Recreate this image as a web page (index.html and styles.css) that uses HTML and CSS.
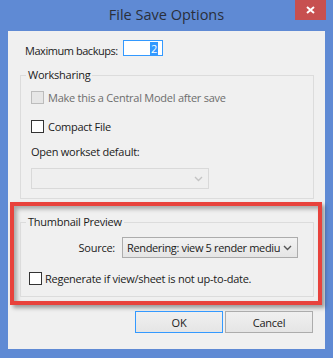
FILE: index.html
```html
<!DOCTYPE html>
<html>
<head>
<meta charset="utf-8">
<link rel="stylesheet" href="styles.css">
</head>
<body>
<div class="window">
  <div class="titlebar">
    <div></div>
    <div class="title">File Save Options</div>
    <div class="close-wrap">
      <div class="close">
        <svg width="9" height="8" viewBox="0 0 9 8"><path d="M1 1 L8 7 M8 1 L1 7" stroke="#fff" stroke-width="2"/></svg>
      </div>
    </div>
  </div>
  <div class="client">
    <div class="row-backups">
      <span class="lbl">Maximum backups:</span>
      <div class="numbox"><span class="sel">2</span></div>
    </div>

    <fieldset class="group ws">
      <legend>Worksharing</legend>
      <div class="group-body ws-body">
        <div class="chk-row disabled">
          <span class="box"></span><span>Make this a Central Model after save</span>
        </div>
        <div class="chk-row compact">
          <span class="box"></span><span>Compact File</span>
        </div>
        <div class="text-row">Open workset default:</div>
        <div class="combo disabled-combo">
          <svg width="9" height="6" viewBox="0 0 9 6"><path d="M1 1 L4.5 4.5 L8 1" fill="none" stroke="#c4c4c4" stroke-width="1.4"/></svg>
        </div>
      </div>
    </fieldset>

    <div class="highlight">
      <fieldset class="group thumb">
        <legend>Thumbnail Preview</legend>
        <div class="group-body thumb-body">
          <div class="source-row">
            <span class="src-lbl">Source:</span>
            <div class="combo source-combo">
              <span class="combo-text">Rendering: view 5 render mediu</span>
              <svg width="9" height="6" viewBox="0 0 9 6"><path d="M1 1 L4.5 4.5 L8 1" fill="none" stroke="#555" stroke-width="1.4"/></svg>
            </div>
          </div>
          <div class="chk-row regen">
            <span class="box"></span><span>Regenerate if view/sheet is not up-to-date.</span>
          </div>
        </div>
      </fieldset>
    </div>

    <div class="buttons">
      <div class="btn default">OK</div>
      <div class="btn">Cancel</div>
    </div>
  </div>
</div>
</body>
</html>
```

FILE: styles.css
```css
html, body {
  margin: 0;
  padding: 0;
}
body {
  width: 333px;
  height: 358px;
  overflow: hidden;
  font-family: "Open Sans", "Noto Sans", sans-serif;
  font-size: 11px;
  letter-spacing: -0.25px;
  color: #1b1b1b;
  white-space: nowrap;
}
.window {
  width: 333px;
  height: 358px;
  background: #5f8ad4;
  display: flex;
  flex-direction: column;
}
.titlebar {
  height: 31px;
  display: grid;
  grid-template-columns: 1fr auto 1fr;
  align-items: start;
}
.title {
  font-size: 14.5px;
  letter-spacing: 0;
  color: #2a2f3a;
  line-height: 16px;
  margin-top: 7px;
}
.close-wrap {
  display: flex;
  justify-content: flex-end;
  padding-right: 7px;
}
.close {
  width: 31px;
  height: 20px;
  background: #c75050;
  display: flex;
  align-items: center;
  justify-content: center;
}
.client {
  background: #f0f0f0;
  margin: 0 8px 9px 8px;
  height: 318px;
  display: flex;
  flex-direction: column;
}
.row-backups {
  display: flex;
  align-items: center;
  margin-top: 9px;
  padding-left: 17px;
  height: 16px;
}
.row-backups .lbl {
  width: 98px;
  flex: none;
  letter-spacing: -0.45px;
  position: relative;
  top: 2px;
}
.numbox {
  height: 14px;
  border: 1px solid #3399ff;
  background: #fff;
  display: flex;
  justify-content: flex-end;
  align-items: center;
  padding-right: 4px;
  box-sizing: content-box;
  width: 34px;
}
.sel {
  background: #3399ff;
  color: #fff;
  line-height: 13px;
  padding: 0 1px;
}
.group {
  margin: 0;
  padding: 0;
  border: 1px solid #dcdcdc;
  min-width: 0;
}
.group legend {
  padding: 0 2px;
  margin-left: 5px;
  line-height: 14px;
  height: 14px;
}
.ws {
  margin: 12px 11px 0 12px;
}
.ws-body {
  padding: 7px 0 9px 10px;
}
.chk-row {
  display: flex;
  align-items: center;
  height: 17px;
}
.box {
  width: 11px;
  height: 11px;
  border: 1px solid #333;
  background: #fff;
  margin-right: 4px;
  flex: none;
}
.chk-row.disabled {
  color: #6d6d6d;
}
.chk-row.disabled .box {
  border-color: #bcbcbc;
  background: #e6e6e6;
}
.chk-row.compact {
  margin-top: 12px;
}
.text-row {
  margin-top: 8px;
  height: 17px;
  line-height: 17px;
}
.combo {
  display: flex;
  align-items: center;
  justify-content: flex-end;
  box-sizing: border-box;
}
.disabled-combo {
  margin-top: 8px;
  width: 178px;
  height: 21px;
  border: 1px solid #d9d9d9;
  background: #efefef;
  padding-right: 5px;
}
.highlight {
  margin: 3px 3px 0 2px;
  border: 4px solid #e8423c;
  box-shadow: 3px 3px 4px rgba(0, 0, 0, 0.35), inset 3px 3px 4px rgba(0, 0, 0, 0.3);
  display: flex;
  flex-direction: column;
}
.thumb {
  margin: 9px 4px 4px 6px;
}
.thumb-body {
  padding: 8px 0 9px 0;
}
.source-row {
  display: flex;
  align-items: center;
  height: 21px;
}
.src-lbl {
  width: 94px;
  flex: none;
  text-align: right;
  margin-right: 7px;
}
.source-combo {
  width: 176px;
  flex: none;
  height: 21px;
  border: 1px solid #acacac;
  background: linear-gradient(#f2f2f2, #e5e5e5);
  justify-content: space-between;
  padding: 0 5px 0 4px;
}
.combo-text {
  overflow: hidden;
  letter-spacing: -0.35px;
}
.source-combo svg {
  flex: none;
}
.chk-row.regen {
  margin-top: 12px;
  padding-left: 8px;
}
.chk-row.regen .box {
  margin-right: 3px;
}
.buttons {
  display: flex;
  justify-content: flex-end;
  gap: 2px;
  margin-top: 6px;
  padding-right: 12px;
}
.btn {
  width: 88px;
  height: 22px;
  box-sizing: border-box;
  border: 1px solid #acacac;
  background: linear-gradient(#f0f0f0, #e5e5e5);
  display: flex;
  align-items: center;
  justify-content: center;
}
.btn.default {
  border-color: #3399ff;
}
```
